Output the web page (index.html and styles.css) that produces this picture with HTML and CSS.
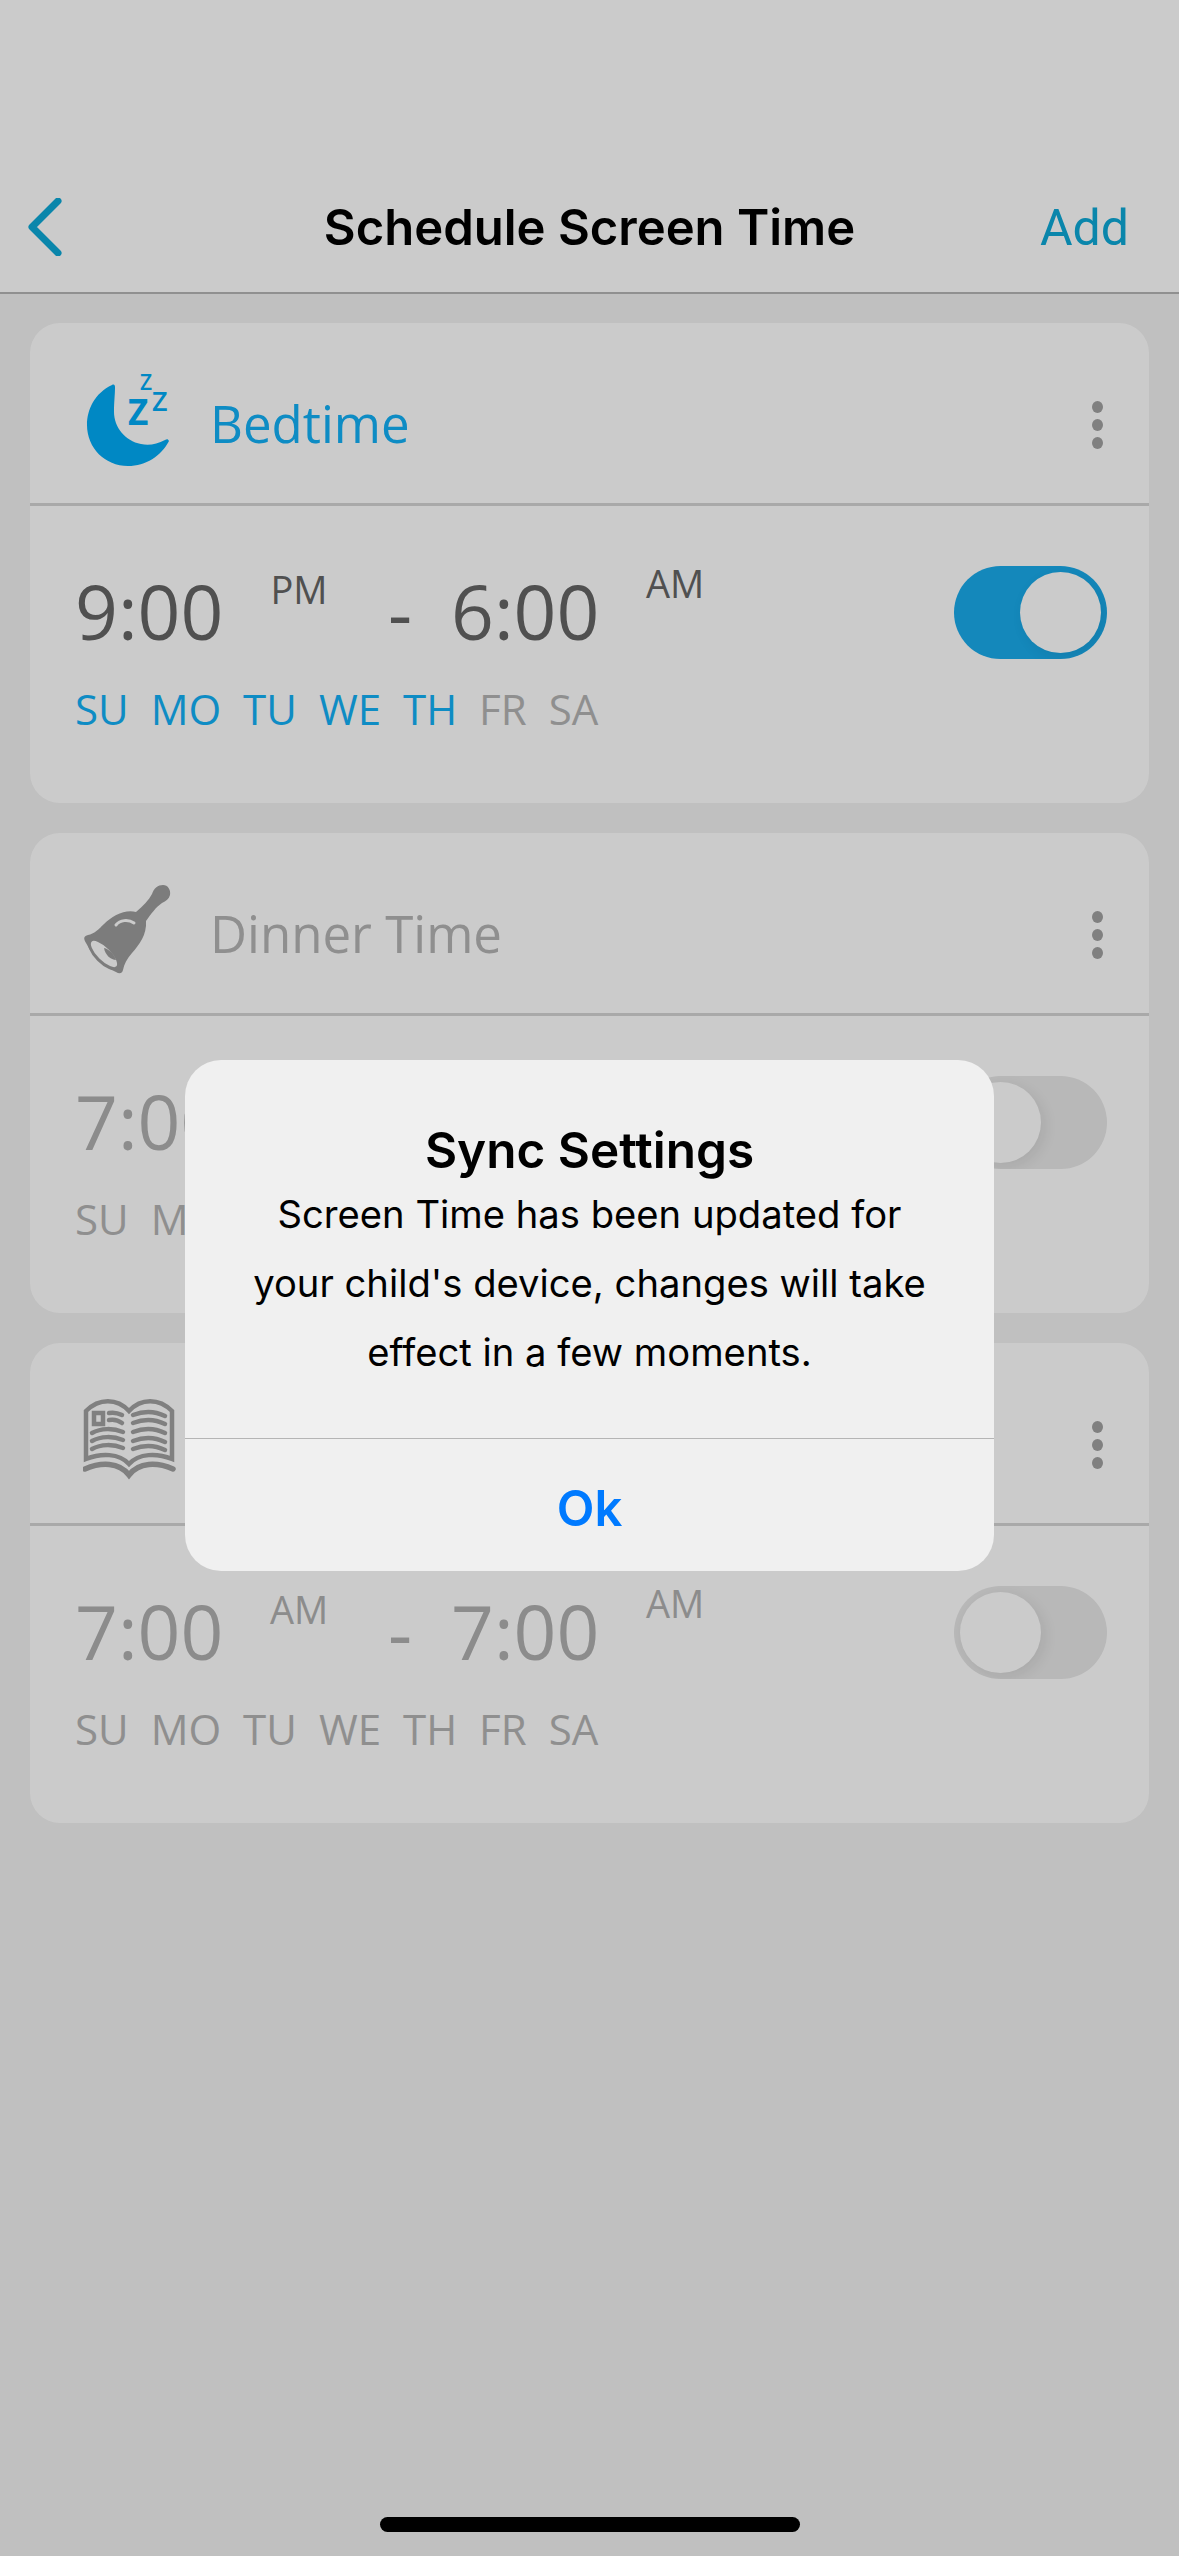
FILE: index.html
```html
<!DOCTYPE html>
<html lang="en">
<head>
    <meta charset="UTF-8">
    <meta name="viewport" content="width=device-width, initial-scale=1.0">
    <title>Schedule Screen Time</title>
    <link rel="stylesheet" href="styles.css">
</head>
<body>
    <div class="screen">
        <header class="topbar">
            <svg class="back" width="34" height="58" viewBox="0 0 34 58">
                <polyline points="30,3 4,29 30,55" />
            </svg>
            <h1 class="page-title">Schedule Screen Time</h1>
            <a class="add-link">Add</a>
        </header>

        <main class="schedule-list">
            <section class="card">
                <div class="card-head">
                    <svg class="card-icon" width="100" height="110" viewBox="0 0 100 110">
                        <path class="moon" d="M29 28C12 36 4 52 4 68C4 91 22 109 45 109C63 109 78 99 86 84C85 82 84 82 82 83C74 87 66 89 58 87C42 84 31 70 31 55C31 45 32 38 32 30C32 28 31 27 29 28Z" />
                        <text class="zed" x="45" y="68" font-size="35">Z</text>
                        <text class="zed-thin" x="69" y="54" font-size="27">Z</text>
                        <text class="zed-thin" x="57" y="33" font-size="21">Z</text>
                    </svg>
                    <span class="card-name is-on">Bedtime</span>
                    <span class="dots"><i></i><i></i><i></i></span>
                </div>
                <div class="card-body">
                    <div class="times">
                        <div class="time-row is-dark">
                            <span class="clock">9:00</span>
                            <span class="ampm">PM</span>
                            <span class="dash">-</span>
                            <span class="clock">6:00</span>
                            <span class="ampm ampm-end">AM</span>
                        </div>
                        <div class="days">
                            <span class="is-on">SU</span>
                            <span class="is-on">MO</span>
                            <span class="is-on">TU</span>
                            <span class="is-on">WE</span>
                            <span class="is-on">TH</span>
                            <span>FR</span>
                            <span>SA</span>
                        </div>
                    </div>
                    <div class="toggle toggle-on"><div class="knob"></div></div>
                </div>
            </section>

            <section class="card">
                <div class="card-head">
                    <svg class="card-icon" width="100" height="110" viewBox="0 0 100 110">
                        <path class="bell" d="M53 45C60 39 66 33 69 27C71 21 75 18 80 18C85 18 88 23 87 28C86 32 83 34 79 36C73 40 68 47 63 54C64 68 56 78 49 86C44 92 41 97 40 103C39 107 36 107 33 105C22 100 10 90 3 76C0 71 1 69 5 68C11 67 16 62 21 57C29 49 42 42 53 45Z" />
                        <ellipse class="bell-cut" cx="21" cy="87" rx="19" ry="8" transform="rotate(45 21 87)" />
                        <path class="bell" d="M21 81C26 82 31 87 33 93C28 93 22 88 21 81Z" />
                        <path class="bell-shine" d="M33 58C37 53 45 52 51 56" />
                    </svg>
                    <span class="card-name">Dinner Time</span>
                    <span class="dots"><i></i><i></i><i></i></span>
                </div>
                <div class="card-body">
                    <div class="times">
                        <div class="time-row">
                            <span class="clock">7:00</span>
                        </div>
                        <div class="days">
                            <span>SU</span>
                            <span>MO</span>
                        </div>
                    </div>
                    <div class="toggle"><div class="knob"></div></div>
                </div>
            </section>

            <section class="card">
                <div class="card-head">
                    <svg class="card-icon book" width="100" height="110" viewBox="0 0 100 110">
                        <path d="M3 82V34C16 21 34 21 46 34C58 21 76 21 89 34V82C74 76 56 76 46 87C36 76 18 76 3 82Z" />
                        <path class="book-base" d="M2 92C18 85 36 85 46 98C56 85 74 85 90 92" />
                        <rect x="11" y="36" width="9" height="11" />
                        <path d="M26 36C31 35 35 36 39 38M26 43C31 42 35 43 39 46M9 56C18 51 30 51 40 55M9 64C18 59 30 59 40 63M9 72C18 67 30 67 40 71M50 38C60 34 72 34 82 39M50 46C60 42 72 42 82 47M50 55C60 51 72 51 82 56M50 64C60 60 72 60 82 65M50 72C60 68 72 68 82 73" />
                    </svg>
                    <span class="card-name"></span>
                    <span class="dots"><i></i><i></i><i></i></span>
                </div>
                <div class="card-body">
                    <div class="times">
                        <div class="time-row">
                            <span class="clock">7:00</span>
                            <span class="ampm">AM</span>
                            <span class="dash">-</span>
                            <span class="clock">7:00</span>
                            <span class="ampm ampm-end">AM</span>
                        </div>
                        <div class="days">
                            <span>SU</span>
                            <span>MO</span>
                            <span>TU</span>
                            <span>WE</span>
                            <span>TH</span>
                            <span>FR</span>
                            <span>SA</span>
                        </div>
                    </div>
                    <div class="toggle"><div class="knob"></div></div>
                </div>
            </section>
        </main>

        <div class="home-bar"></div>
    </div>

    <div class="scrim">
        <div class="alert">
            <div class="alert-text">
                <h2 class="alert-title">Sync Settings</h2>
                <p class="alert-msg">Screen Time has been updated for your child's device, changes will take effect in a few moments.</p>
            </div>
            <button class="alert-btn">Ok</button>
        </div>
    </div>
</body>
</html>
```

FILE: styles.css
```css
* {
    box-sizing: border-box;
}
body {
    margin: 0;
    font-family: "Open Sans", sans-serif;
    color: #646464;
}
.screen {
    width: 1179px;
    height: 2556px;
    background-color: #f0f0f0;
    display: flex;
    flex-direction: column;
}

/* top bar */
.topbar {
    height: 294px;
    padding: 162px 28px 0;
    background-color: #fefefe;
    border-bottom: 2px solid #b4b4b4;
    display: grid;
    grid-template-columns: 1fr auto 1fr;
    align-items: center;
}
.back polyline {
    fill: none;
    stroke: #0da8d6;
    stroke-width: 7;
    stroke-linecap: round;
    stroke-linejoin: round;
}
.page-title {
    margin: 0;
    font-family: Inter, sans-serif;
    font-size: 49px;
    font-weight: 600;
    color: #000;
}
.add-link {
    justify-self: end;
    margin: 2px 22px 0 0;
    font-family: Roboto, sans-serif;
    font-size: 50px;
    color: #0da8d6;
}

/* cards */
.schedule-list {
    padding: 29px 30px 0;
    display: flex;
    flex-direction: column;
    gap: 30px;
}
.card {
    height: 480px;
    background-color: #fefefe;
    border-radius: 30px;
}
.card-head {
    height: 183px;
    padding: 0 46px 3px 53px;
    border-bottom: 3px solid #d4d4d4;
    display: flex;
    align-items: center;
}
.card-icon {
    margin-right: 27px;
    flex-shrink: 0;
}
.moon {
    fill: #00aaf5;
}
.zed, .zed-thin {
    font-family: "Open Sans", sans-serif;
    fill: #00aaf5;
}
.zed {
    font-weight: 700;
}
.zed-thin {
    font-weight: 600;
}
.bell {
    fill: #9c9c9c;
}
.bell-cut {
    fill: #fefefe;
    stroke: #9c9c9c;
    stroke-width: 3;
}
.bell-shine {
    fill: none;
    stroke: #fefefe;
    stroke-width: 3;
    stroke-linecap: round;
}
.book path, .book rect {
    fill: none;
    stroke: #a0a0a0;
    stroke-width: 4.5;
    stroke-linecap: round;
}
.book .book-base {
    stroke-width: 5.5;
}
.card-name {
    margin-top: 22px;
    font-size: 51px;
    color: #b3b3b3;
    flex-grow: 1;
}
.dots {
    margin-top: 26px;
    display: flex;
    flex-direction: column;
    gap: 6px;
}
.dots i {
    width: 11px;
    height: 12px;
    border-radius: 50%;
    background-color: #a0a0a0;
}
.is-on {
    color: #12aff5 !important;
}

.card-body {
    height: 294px;
    padding: 0 42px 0 45px;
    display: flex;
    justify-content: space-between;
}
.times {
    display: flex;
    flex-direction: column;
}
.time-row {
    padding-top: 65px;
    display: flex;
    color: #afafaf;
}
.time-row.is-dark {
    color: #646464;
}
.clock {
    width: 193px;
    font-size: 75px;
    line-height: 80px;
}
.ampm {
    width: 62px;
    height: 60px;
    margin-right: 58px;
    margin-top: -12px;
    text-align: center;
    font-size: 38px;
    line-height: 60px;
}
.ampm-end {
    margin-top: -18px;
}
.dash {
    width: 63px;
    font-size: 75px;
    line-height: 80px;
}
.days {
    margin-top: 29px;
    display: flex;
    gap: 22px;
    font-size: 42px;
    line-height: 58px;
    color: #b3b3b3;
}

.toggle {
    width: 153px;
    height: 93px;
    margin-top: 60px;
    padding: 6px;
    border-radius: 47px;
    background-color: #e6e6e6;
    display: flex;
    overflow: hidden;
}
.toggle-on {
    background-color: #19aaea;
    justify-content: flex-end;
}
.knob {
    width: 81px;
    height: 81px;
    border-radius: 50%;
    background-color: #fefefe;
    box-shadow: 4px 4px 14px rgba(0, 0, 0, 0.08);
}

.home-bar {
    width: 420px;
    height: 15px;
    margin: auto auto 24px;
    border-radius: 8px;
    background-color: #000;
}

/* dialog on top of everything */
.scrim {
    position: absolute;
    inset: 0;
    width: 1179px;
    height: 2556px;
    padding-top: 1060px;
    background-color: rgba(0, 0, 0, 0.2);
}
.alert {
    width: 809px;
    height: 511px;
    margin: 0 auto;
    border-radius: 36px;
    background-color: #f0f0f0;
    display: flex;
    flex-direction: column;
    text-align: center;
}
.alert-text {
    height: 379px;
    padding: 60px 60px 0;
    border-bottom: 1px solid #b5b5b5;
}
.alert-title {
    margin: 0;
    font-family: Inter, sans-serif;
    font-size: 49.5px;
    line-height: 60px;
    font-weight: 600;
    color: #000;
}
.alert-msg {
    margin: 0;
    font-family: Inter, sans-serif;
    font-size: 38.2px;
    line-height: 69px;
    color: #000;
}
.alert-btn {
    flex-grow: 1;
    padding: 6px 0 0;
    border: 0;
    background: none;
    font-family: Inter, sans-serif;
    font-size: 49px;
    font-weight: 600;
    color: #007aff;
}
```
